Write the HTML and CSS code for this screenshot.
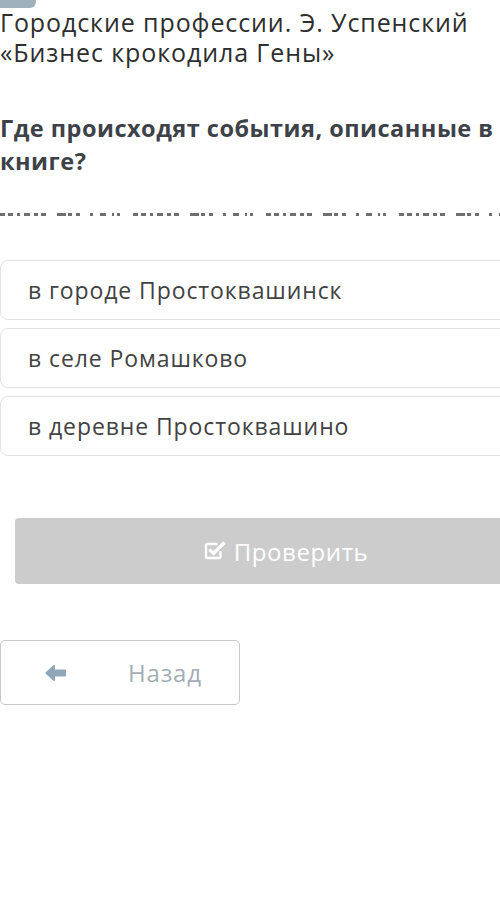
FILE: index.html
```html
<!DOCTYPE html>
<html lang="ru">
<head>
<meta charset="utf-8">
<link rel="stylesheet" href="styles.css">
</head>
<body>
<div class="page">
  <div class="tab"></div>
  <h1 class="title">Городские профессии. Э. Успенский «Бизнес крокодила Гены»</h1>
  <h2 class="question">Где происходят события, описанные в книге?</h2>
  <div class="cut"></div>
  <div class="options">
    <div class="option">в городе Простоквашинск</div>
    <div class="option">в селе Ромашково</div>
    <div class="option">в деревне Простоквашино</div>
  </div>
  <div class="check-wrap">
    <div class="check">
      <svg class="check-icon" viewBox="0 0 22 20" width="22" height="20">
        <path d="M16.5 11v5.5a1.5 1.5 0 0 1-1.5 1.5H3.5A1.5 1.5 0 0 1 2 16.5v-11A1.5 1.5 0 0 1 3.5 4h10" fill="none" stroke="#fff" stroke-width="2.4"/>
        <path d="M5.5 9.5l4 4L20.5 2.5" fill="none" stroke="#fff" stroke-width="3.2"/>
      </svg>
      <span>Проверить</span>
    </div>
  </div>
  <div class="back">
    <svg class="back-icon" viewBox="0 0 22 18" width="22" height="18">
      <path d="M1.5 9L9 2V6.5H20V11.5H9V16Z" fill="#8fa5b8" stroke="#8fa5b8" stroke-width="2" stroke-linejoin="round"/>
    </svg>
    <span class="back-text">Назад</span>
  </div>
</div>
</body>
</html>
```
FILE: styles.css
```css
html, body {
  margin: 0;
  padding: 0;
  background: #fff;
  overflow: hidden;
}
.page {
  width: 500px;
  height: 918px;
  font-family: "Open Sans", "Noto Sans", sans-serif;
  position: relative;
  overflow: hidden;
}
.tab {
  position: absolute;
  left: 0;
  top: 0;
  width: 36px;
  height: 8px;
  background: #9eb1bd;
  border-bottom-right-radius: 6px;
}
.title {
  margin: 0;
  padding-top: 7px;
  font-weight: 400;
  font-size: 25px;
  letter-spacing: 0.9px;
  line-height: 30px;
  color: #2e2e2e;
  width: 490px;
}
.question {
  margin: 0;
  margin-top: 45px;
  font-weight: 700;
  font-size: 23.5px;
  letter-spacing: 0.5px;
  line-height: 33px;
  color: #3d4148;
  width: 505px;
}
.cut {
  margin-top: 35px;
  height: 3px;
  width: 500px;
  background:
    repeating-linear-gradient(90deg,
      #555 0 5px, transparent 5px 8px,
      #555 8px 13px, transparent 13px 17px,
      #555 17px 20px, transparent 20px 24px,
      #555 24px 30px, transparent 30px 34px,
      #555 34px 38px, transparent 38px 41px,
      #555 41px 46px, transparent 46px 57px,
      #555 57px 66px, transparent 66px 68px,
      #555 68px 72px, transparent 72px 76px,
      #555 76px 80px, transparent 80px 90px,
      #555 90px 93px, transparent 93px 100px,
      #555 100px 106px, transparent 106px 112px,
      #555 112px 114px, transparent 114px 117px,
      #555 117px 120px, transparent 120px 133px);
  opacity: 0.85;
}
.options {
  margin-top: 44px;
  display: flex;
  flex-direction: column;
  gap: 8px;
}
.option {
  width: 540px;
  height: 60px;
  box-sizing: border-box;
  border: 1px solid #e3e3e3;
  border-radius: 8px;
  padding-left: 27px;
  display: flex;
  align-items: center;
  font-size: 23px;
  letter-spacing: 0.9px;
  color: #424242;
  background: #fff;
}
.check-wrap {
  margin-top: 62px;
  padding-left: 15px;
}
.check {
  width: 542px;
  height: 66px;
  background: #cccccc;
  border-radius: 4px;
  display: flex;
  align-items: center;
  justify-content: center;
  gap: 8px;
  color: #fff;
  font-size: 24px;
  letter-spacing: 0.6px;
}
.check-icon {
  display: block;
  margin-top: -2px;
}
.back {
  margin-top: 56px;
  width: 240px;
  height: 65px;
  box-sizing: border-box;
  border: 1px solid #c8c8c8;
  border-radius: 5px;
  display: flex;
  align-items: center;
  padding-left: 44px;
}
.back-icon {
  display: block;
}
.back-text {
  margin-left: 61px;
  font-size: 24px;
  letter-spacing: 0.8px;
  color: #a3adb5;
}
```
